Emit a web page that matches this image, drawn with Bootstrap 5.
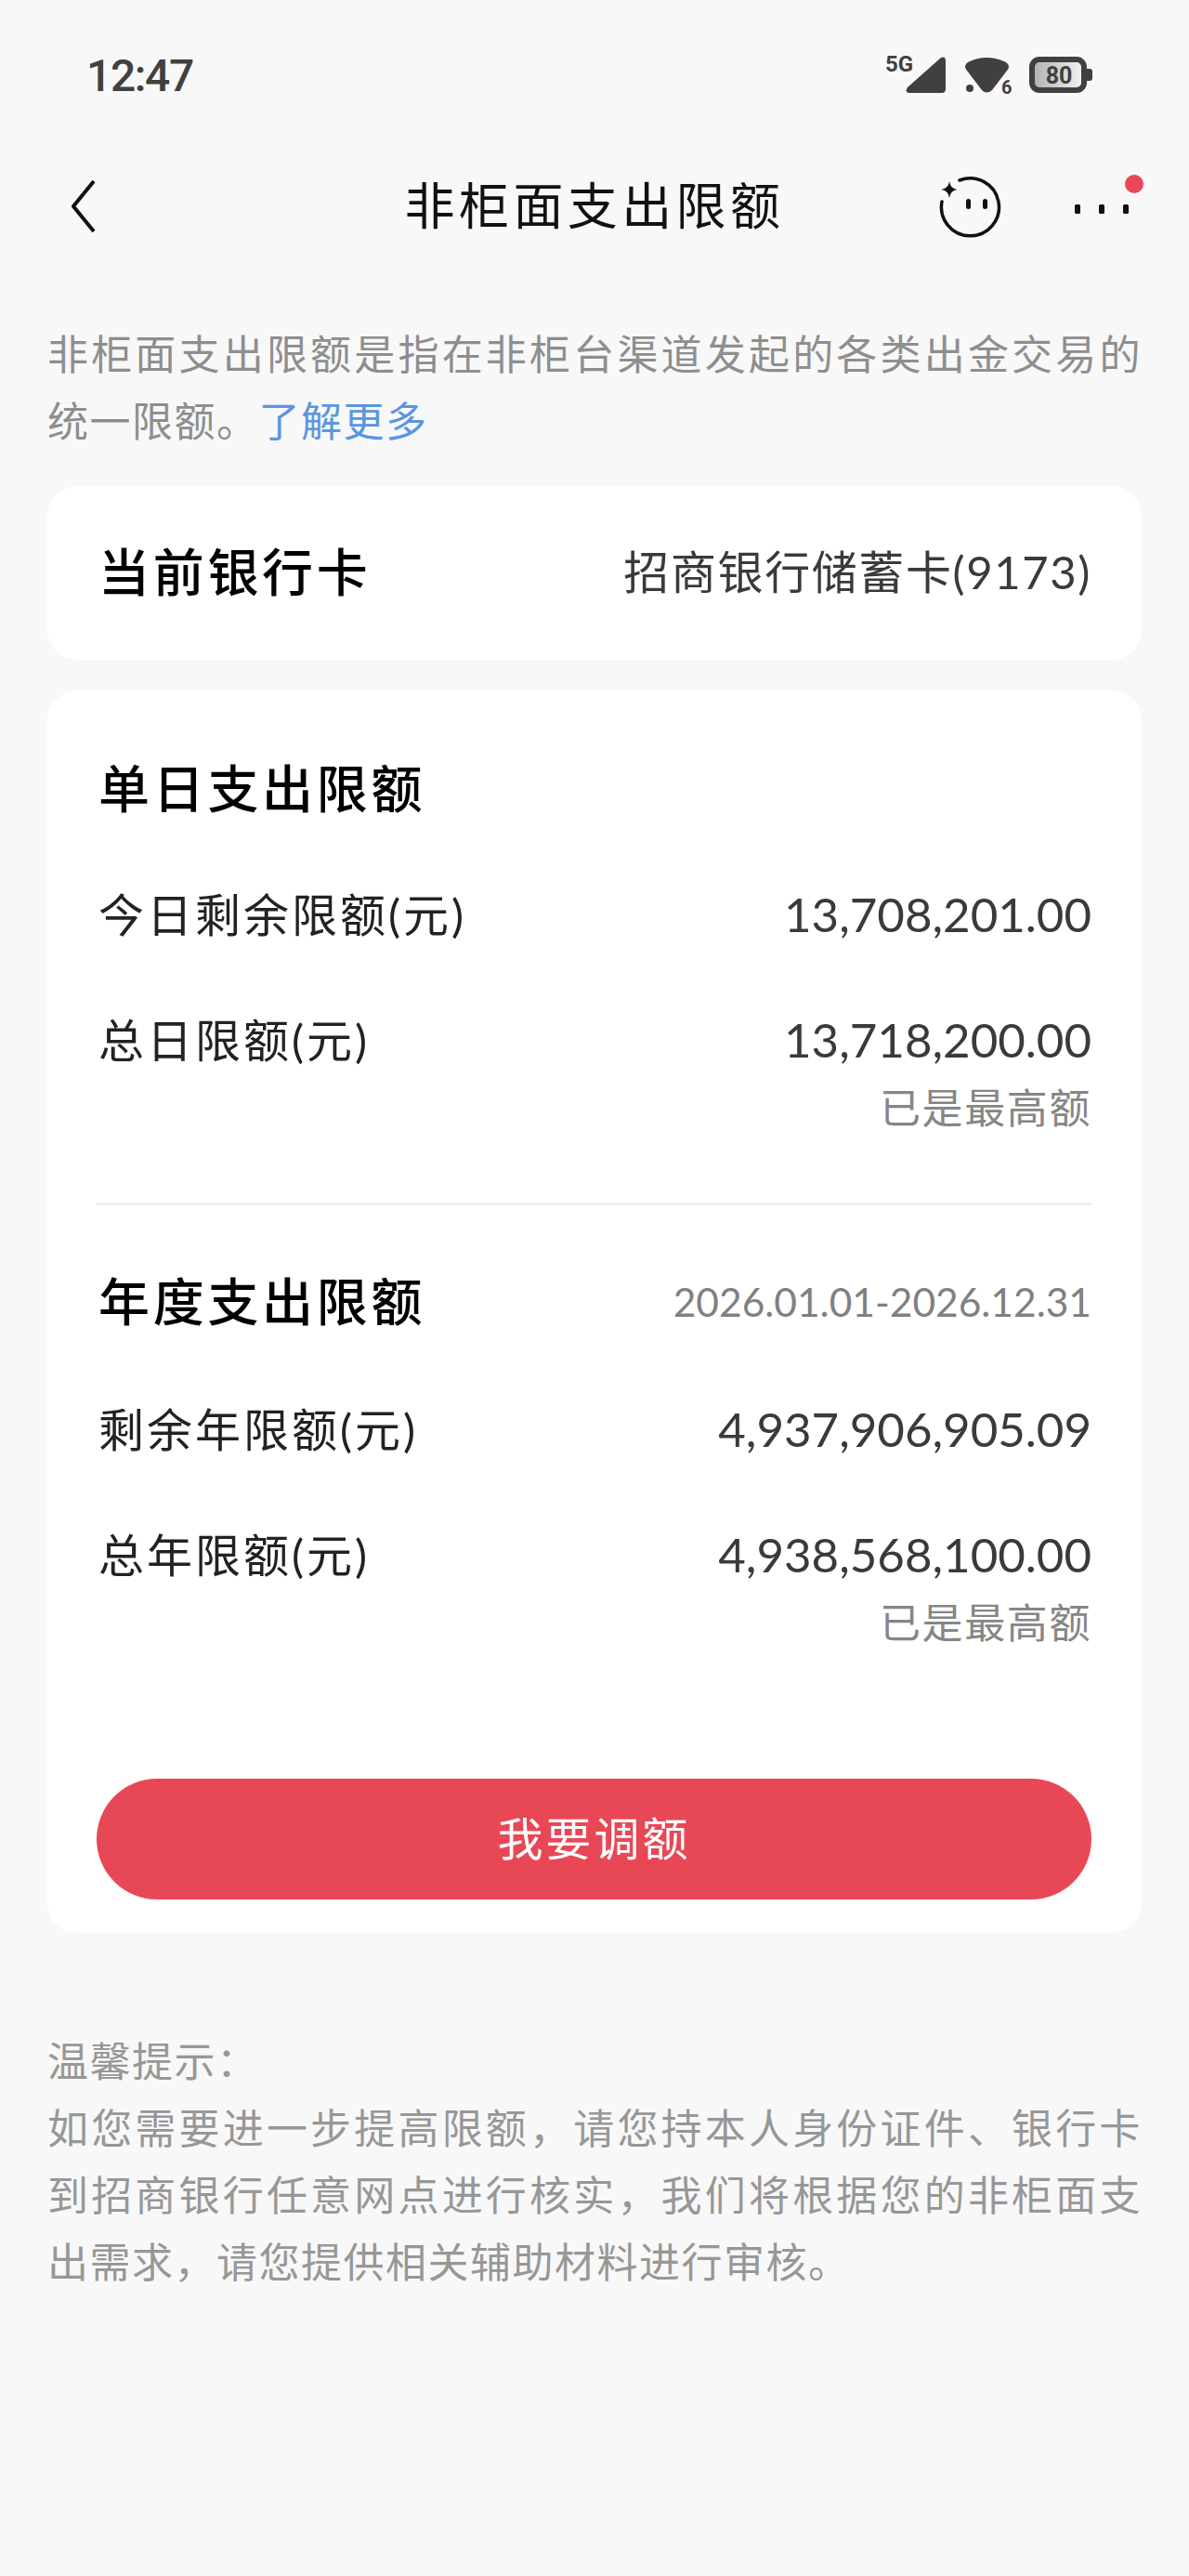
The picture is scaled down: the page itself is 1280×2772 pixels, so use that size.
<!DOCTYPE html>
<html lang="zh-CN">
<head>
  <meta charset="UTF-8" />
  <meta name="viewport" content="width=device-width, initial-scale=1.0" />
  <title>非柜面支出限额</title>
  <link href="https://cdn.jsdelivr.net/npm/bootstrap@5.3.0/dist/css/bootstrap.min.css" rel="stylesheet" />
  <style>
    body {
      background-color: #f8f8f8;
      font-family: Lato, "Noto Sans CJK SC", sans-serif;
      height: 2772px;
    }

    /* status bar */
    .status-bar {
      height: 160px;
      padding: 0 101px 0 93px;
      color: #404040;
    }
    .status-time {
      font-family: Roboto, sans-serif;
      font-size: 48px;
      font-weight: 500;
      letter-spacing: -1.4px;
      line-height: 1;
      padding-top: 3px;
    }

    /* title bar */
    .title-bar {
      height: 124px;
      padding: 0 61px;
    }
    .bar-side { flex: 1 1 0; }
    .title-bar h1 {
      font-size: 54px;
      font-weight: 400;
      letter-spacing: 4.4px;
      margin: 0;
      color: #111;
      line-height: 72px;
    }
    .more-wrap {
      position: relative;
      margin: 6px 0 0 78px;
      height: 12px;
    }
    .unread-dot {
      position: absolute;
      top: -31px;
      right: -12px;
      width: 20px;
      height: 20px;
      border-radius: 50%;
      background: #e84855;
    }

    .page-body { padding: 61px 51px 0; }

    .intro-text, .tips-text {
      font-size: 44px;
      line-height: 72px;
      letter-spacing: 1.5px;
      text-align: justify;
      margin: 0;
    }
    .intro-text { color: #8e8e8e; }
    .intro-text a { color: #5a96e0; text-decoration: none; }
    .tips-text { color: #979797; }

    .limit-card {
      border: 0;
      border-radius: 32px;
      background: #fff;
    }
    .bank-card { margin-top: 34px; height: 187px; padding: 0 54px 3px 53px; }
    .main-card { margin-top: 33px; height: 1337px; padding: 69px 54px 36px 53px; }

    .sect-title {
      font-size: 55px;
      font-weight: 500;
      letter-spacing: 3.7px;
      line-height: 72px;
      color: #000;
      margin: 0 0 0 2px;
    }
    .row-label {
      font-size: 49px;
      letter-spacing: 3px;
      line-height: 72px;
      color: #222;
      margin-left: 2px;
    }
    .row-value {
      font-size: 51px;
      line-height: 72px;
      color: #3a3a3a;
      text-align: right;
    }
    .bank-name {
      font-size: 49px;
      letter-spacing: 1.6px;
      line-height: 72px;
      color: #3a3a3a;
    }
    .max-note {
      font-size: 44px;
      letter-spacing: 1.6px;
      line-height: 74px;
      color: #868686;
    }
    .date-range {
      font-size: 42.5px;
      color: #808080;
      line-height: 74px;
    }
    .gap-a { margin-top: 64px; }
    .gap-b { margin-top: 63px; }
    .split-line {
      margin: 65px 0 67px;
      border: 0;
      border-top: 3px solid #eee;
      opacity: 1;
    }
    .adjust-btn {
      margin-top: auto;
      height: 130px;
      font-size: 49px;
      letter-spacing: 3px;
      color: #fff;
      background: #e84855;
      border: 0;
    }
    .adjust-btn:hover { background: #e84855; color: #fff; }
    .tips-wrap { margin-top: 102px; }
  </style>
</head>
<body>

  <!-- status bar -->
  <div class="status-bar d-flex justify-content-between align-items-center">
    <div class="status-time">12:47</div>
    <svg width="230" height="60" viewBox="950 50 230 60">
      <text x="954" y="77" font-family="Roboto, sans-serif" font-weight="700" font-size="24" fill="#404040">5G</text>
      <path d="M1014 62 Q1019 60 1019 66 V96 Q1019 100 1015 100 H981 Q974 100 978 94 Z" fill="#404040"/>
      <path d="M1040 72 Q1040 68 1045 66 Q1063 58 1082 66 Q1087 68 1087 72 Q1087 74 1085 76 L1069 97 Q1063 102 1058 97 L1042 76 Q1040 74 1040 72 Z" fill="#404040"/>
      <circle cx="1045" cy="95" r="4" fill="#404040"/>
      <text x="1079" y="101" font-family="Roboto, sans-serif" font-weight="700" font-size="20" fill="#404040">6</text>
      <defs>
        <linearGradient id="battFill" x1="0" x2="1" y1="0" y2="0">
          <stop offset="0" stop-color="#b0b0b0"/>
          <stop offset="1" stop-color="#f4f4f4"/>
        </linearGradient>
      </defs>
      <rect x="1112" y="64" width="56" height="33" rx="8" fill="url(#battFill)" stroke="#404040" stroke-width="6"/>
      <path d="M1171 74 h3 q3 0 3 3 v7 q0 3 -3 3 h-3 Z" fill="#404040"/>
      <text x="1141" y="90" text-anchor="middle" font-family="Roboto, sans-serif" font-weight="700" font-size="25" fill="#404040">80</text>
    </svg>
  </div>

  <!-- title bar -->
  <div class="title-bar d-flex align-items-center">
    <div class="bar-side d-flex">
      <svg class="ms-3" width="26" height="58" viewBox="0 0 26 58">
        <path d="M24 2 L2 29 L24 56" fill="none" stroke="#111" stroke-width="4"/>
      </svg>
    </div>
    <h1>非柜面支出限额</h1>
    <div class="bar-side d-flex align-items-center justify-content-end">
      <svg width="70" height="70" viewBox="0 0 70 70">
        <path d="M24 7 A31 31 0 1 1 5 30" fill="none" stroke="#111" stroke-width="3.5" stroke-linecap="round"/>
        <path d="M13 8 Q14 16 21.500 17 Q14 18 13 26 Q12 18 4 17 Q12 16 13 8 Z" fill="#111"/>
        <rect x="31" y="27" width="5" height="11" rx="2.5" fill="#111"/>
        <rect x="49" y="27" width="5" height="11" rx="2.5" fill="#111"/>
      </svg>
      <div class="more-wrap d-flex">
        <span class="unread-dot"></span>
        <svg width="58" height="12" viewBox="0 0 58 12" class="me-1">
          <rect x="0" y="1" width="6" height="10" rx="1.5" fill="#111"/>
          <rect x="26" y="1" width="6" height="10" rx="1.5" fill="#111"/>
          <rect x="52" y="1" width="6" height="10" rx="1.5" fill="#111"/>
        </svg>
      </div>
    </div>
  </div>

  <div class="page-body">
    <p class="intro-text">非柜面支出限额是指在非柜台渠道发起的各类出金交易的统一限额。<a href="#">了解更多</a></p>

    <div class="card limit-card bank-card flex-row align-items-center justify-content-between">
      <h2 class="sect-title">当前银行卡</h2>
      <div class="bank-name">招商银行储蓄卡(9173)</div>
    </div>

    <div class="card limit-card main-card">
      <h2 class="sect-title">单日支出限额</h2>
      <div class="d-flex justify-content-between gap-a">
        <div class="row-label">今日剩余限额(元)</div>
        <div class="row-value">13,708,201.00</div>
      </div>
      <div class="d-flex justify-content-between gap-b">
        <div class="row-label">总日限额(元)</div>
        <div class="text-end">
          <div class="row-value">13,718,200.00</div>
          <div class="max-note">已是最高额</div>
        </div>
      </div>

      <hr class="split-line" />

      <div class="d-flex justify-content-between">
        <h2 class="sect-title">年度支出限额</h2>
        <div class="date-range">2026.01.01-2026.12.31</div>
      </div>
      <div class="d-flex justify-content-between gap-a">
        <div class="row-label">剩余年限额(元)</div>
        <div class="row-value">4,937,906,905.09</div>
      </div>
      <div class="d-flex justify-content-between gap-b">
        <div class="row-label">总年限额(元)</div>
        <div class="text-end">
          <div class="row-value">4,938,568,100.00</div>
          <div class="max-note">已是最高额</div>
        </div>
      </div>

      <button type="button" class="btn adjust-btn rounded-pill w-100">我要调额</button>
    </div>

    <div class="tips-wrap">
      <p class="tips-text">温馨提示：</p>
      <p class="tips-text">如您需要进一步提高限额，请您持本人身份证件、银行卡到招商银行任意网点进行核实，我们将根据您的非柜面支出需求，请您提供相关辅助材料进行审核。</p>
    </div>
  </div>

  <script src="https://cdn.jsdelivr.net/npm/bootstrap@5.3.0/dist/js/bootstrap.bundle.min.js"></script>
</body>
</html>
